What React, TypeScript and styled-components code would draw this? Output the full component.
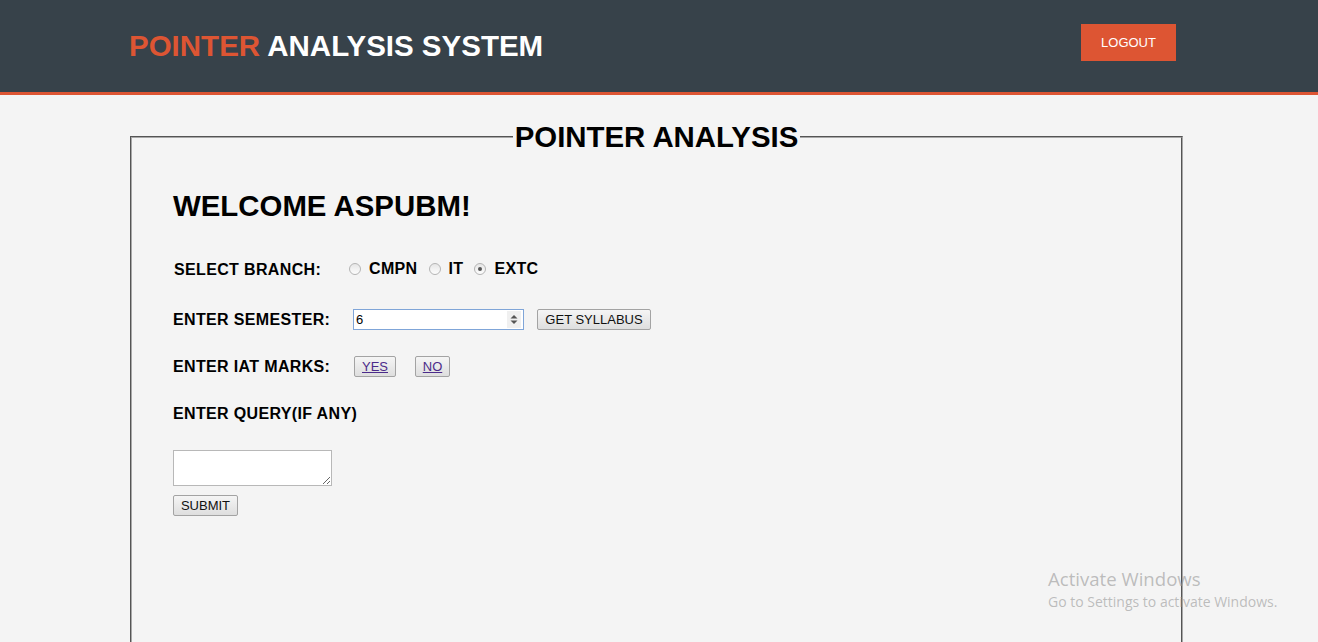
import React from "react";
import styled, { createGlobalStyle } from "styled-components";

const Global = createGlobalStyle`
  html, body { margin: 0; padding: 0; }
  body {
    background: #f4f4f4;
    font-family: "Liberation Sans", Arial, sans-serif;
    color: #000;
    height: 642px;
    overflow: hidden;
  }
`;

const Header = styled.header`
  height: 92px;
  background: #37424a;
  border-bottom: 3px solid #dd5533;
  display: flex;
  align-items: center;
  justify-content: space-between;
  padding: 0 142px 0 129px;
`;

const Brand = styled.h1`
  margin: 0;
  font-size: 29.5px;
  font-weight: bold;
  color: #fff;
`;

const Accent = styled.span`
  color: #dd5533;
`;

const LogoutButton = styled.button`
  width: 95px;
  height: 37px;
  margin-bottom: 8px;
  background: #dd5533;
  color: #fff;
  border: none;
  font-family: "Liberation Sans", Arial, sans-serif;
  font-size: 13px;
  padding: 0;
`;

const Frame = styled.fieldset`
  margin: 25px 0 0 130px;
  width: 1053px;
  box-sizing: border-box;
  min-height: 560px;
  border: 2px groove #a8a8a8;
  padding: 0 41px;
`;

const Legend = styled.legend`
  margin: 0 auto;
  padding: 0 2px;
  font-size: 29.4px;
  font-weight: bold;
  line-height: normal;
`;

const Welcome = styled.h2`
  margin: 35px 0 0;
  font-size: 29.4px;
  font-weight: bold;
  line-height: normal;
`;

const Row = styled.div<{ $top: number }>`
  display: flex;
  align-items: center;
  height: 24px;
  margin-top: ${(p) => p.$top}px;
`;

const Label = styled.span<{ $width?: number; $indent?: number }>`
  font-size: 16px;
  font-weight: bold;
  letter-spacing: 0.35px;
  width: ${(p) => (p.$width ? `${p.$width}px` : "auto")};
  padding-left: ${(p) => p.$indent ?? 0}px;
  box-sizing: border-box;
  flex: none;
  margin-top: 1px;
`;

const RadioGroup = styled.div`
  display: flex;
  align-items: center;
  gap: 11px;
`;

const RadioItem = styled.label`
  display: flex;
  align-items: center;
  gap: 8px;
  font-size: 16px;
  font-weight: bold;
  letter-spacing: 0.35px;
`;

const Radio = styled.input.attrs({ type: "radio" })`
  appearance: none;
  margin: 0;
  width: 12px;
  height: 12px;
  border-radius: 50%;
  border: 1px solid #b4b4b4;
  background: linear-gradient(#e6e6e6, #fdfdfd);
  display: grid;
  place-items: center;
  &:checked::after {
    content: "";
    width: 4px;
    height: 4px;
    border-radius: 50%;
    background: #555;
  }
`;

const NumberBox = styled.div`
  width: 171px;
  height: 21px;
  box-sizing: border-box;
  border: 1px solid #7fa5d8;
  background: #fff;
  display: flex;
  align-items: center;
  justify-content: space-between;
  padding: 0 2px;
  font-size: 13px;
  margin-left: 4px;
`;

const Spinner = styled.span`
  width: 14px;
  height: 17px;
  background: #f0f0f0;
  display: grid;
  place-items: center;
`;

const Button = styled.button<{ $w: number }>`
  width: ${(p) => p.$w}px;
  height: 21px;
  box-sizing: border-box;
  padding: 0;
  border: 1px solid #a3a3a3;
  border-radius: 2px;
  background: linear-gradient(#f5f5f5, #dedede);
  font-family: "Liberation Sans", Arial, sans-serif;
  font-size: 13px;
  color: #111;
  flex: none;
`;

const LinkText = styled.span`
  color: #4b2b8a;
  text-decoration: underline;
`;

const Controls = styled.div<{ $gap: number; $left: number }>`
  display: flex;
  align-items: center;
  gap: ${(p) => p.$gap}px;
  margin-left: ${(p) => p.$left}px;
`;

const Query = styled.textarea`
  display: block;
  margin: 25px 0 0;
  width: 159px;
  height: 36px;
  box-sizing: border-box;
  border: 1px solid #b8b8b8;
  background: #fff;
  resize: both;
`;

const SubmitRow = styled.div`
  margin-top: 9px;
`;

const Watermark = styled.div`
  position: absolute;
  left: 1048px;
  top: 567px;
  color: rgba(150, 150, 150, 0.6);
  font-family: "Open Sans", "Noto Sans", sans-serif;
  pointer-events: none;
`;

const WmTitle = styled.div`
  font-size: 18.6px;
  line-height: 24px;
`;

const WmSub = styled.div`
  font-size: 14px;
  line-height: 21px;
`;

export default function App() {
  return (
    <>
      <Global />
      <Header>
        <Brand>
          <Accent>POINTER</Accent> ANALYSIS SYSTEM
        </Brand>
        <LogoutButton>LOGOUT</LogoutButton>
      </Header>
      <Frame>
        <Legend>POINTER ANALYSIS</Legend>
        <Welcome>WELCOME ASPUBM!</Welcome>
        <Row $top={34}>
          <Label $width={176} $indent={1}>SELECT BRANCH:</Label>
          <RadioGroup>
            <RadioItem>
              <Radio name="branch" />
              CMPN
            </RadioItem>
            <RadioItem>
              <Radio name="branch" />
              IT
            </RadioItem>
            <RadioItem>
              <Radio name="branch" defaultChecked />
              EXTC
            </RadioItem>
          </RadioGroup>
        </Row>
        <Row $top={26}>
          <Label $width={176}>ENTER SEMESTER:</Label>
          <Controls $gap={13} $left={0}>
            <NumberBox>
              <span>6</span>
              <Spinner>
                <svg width="8" height="11" viewBox="0 0 8 11">
                  <path d="M0.5 4.5 L4 1 L7.5 4.5 Z" fill="#555" />
                  <path d="M0.5 6.5 L4 10 L7.5 6.5 Z" fill="#555" />
                </svg>
              </Spinner>
            </NumberBox>
            <Button $w={114}>GET SYLLABUS</Button>
          </Controls>
        </Row>
        <Row $top={23}>
          <Label $width={176}>ENTER IAT MARKS:</Label>
          <Controls $gap={19} $left={5}>
            <Button $w={42}>
              <LinkText>YES</LinkText>
            </Button>
            <Button $w={35}>
              <LinkText>NO</LinkText>
            </Button>
          </Controls>
        </Row>
        <Row $top={23}>
          <Label>ENTER QUERY(IF ANY)</Label>
        </Row>
        <Query />
        <SubmitRow>
          <Button $w={65}>SUBMIT</Button>
        </SubmitRow>
      </Frame>
      <Watermark>
        <WmTitle>Activate Windows</WmTitle>
        <WmSub>Go to Settings to activate Windows.</WmSub>
      </Watermark>
    </>
  );
}
